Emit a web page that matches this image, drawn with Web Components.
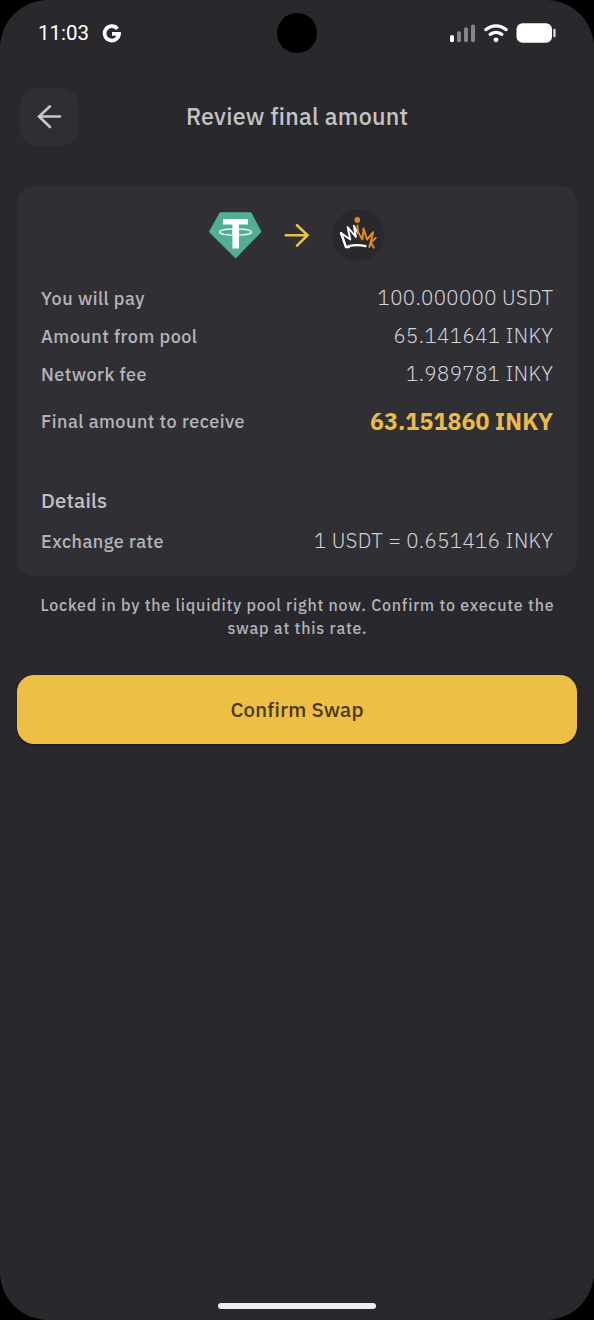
<!DOCTYPE html>
<html lang="en">
<head>
<meta charset="utf-8">
<title>Review final amount</title>
<style>
html,body{margin:0;background:#000}
body{font-family:"IBM Plex Sans","Noto Sans",sans-serif;color:#c6c5cb}
</style>
</head>
<body>
<swap-screen></swap-screen>
<script>
const define = (name, html, setup) => {
  const tpl = document.createElement('template');
  tpl.innerHTML = html;
  customElements.define(name, class extends HTMLElement {
    connectedCallback() {
      if (this.shadowRoot) return;
      this.attachShadow({mode: 'open'}).append(tpl.content.cloneNode(true));
      if (setup) setup(this);
    }
  });
};

/* Text line tracked so that it spans the number of pixels in its "span" attribute. */
define('tracked-text', `<style>:host{display:block;white-space:nowrap}span{display:inline-block}</style><span><slot></slot></span>`, el => {
  const s = el.shadowRoot.querySelector('span');
  const n = el.textContent.length - 1;
  const gap = (Number(el.getAttribute('span')) - s.getBoundingClientRect().width) / n;
  s.style.letterSpacing = gap + 'px';
  s.style.marginRight = -gap + 'px';
});

define('status-bar', `<style>
:host{display:grid;grid-template-columns:1fr 40px 1fr;align-items:center;height:66px;padding:0 38px;box-sizing:border-box;color:#fff}
.l{display:flex;align-items:center;gap:13px;font:400 20.5px/24px Roboto,sans-serif}
.r{display:flex;align-items:center;justify-content:flex-end;gap:8px}
.cam{width:40px;height:40px;border-radius:50%;background:#000}
svg{display:block}
.g{margin-top:2px}
</style>
<div class="l"><tracked-text span="51">11:03</tracked-text>
<svg class="g" width="20" height="20" viewBox="0 0 20 20"><path d="M15.5 4.9A7.2 7.2 0 1 0 17 9.8H10" fill="none" stroke="#fff" stroke-width="3.7"/></svg></div>
<div class="cam"></div>
<div class="r">
<svg width="26" height="19" viewBox="0 0 26 19"><rect x="0" y="11" width="4" height="7.3" rx="1.8" fill="#fff"/><g fill="#858488"><rect x="7" y="7.2" width="4" height="11.1" rx="1.8"/><rect x="14" y="3.3" width="4" height="15" rx="1.8"/><rect x="21" y=".5" width="4" height="17.8" rx="1.8"/></g></svg>
<svg width="24" height="19" viewBox="0 0 24 19"><g fill="none" stroke="#fff" stroke-width="3.2" stroke-linecap="round"><path d="M1.8 5.6Q12-1.8 22.2 5.6M6.2 10.4Q12 6.3 17.8 10.4"/></g><circle cx="12" cy="15.8" r="2.4" fill="#fff"/></svg>
<svg width="40" height="20" viewBox="0 0 40 20"><rect x="0.5" y="0.3" width="35.5" height="19.4" rx="6" fill="#fff"/><rect x="37.3" y="5.7" width="2.3" height="8.6" rx="1.1" fill="#ddd"/></svg>
</div>`);

define('page-header', `<style>
:host{display:grid;grid-template-columns:58px 1fr 58px;align-items:center;height:58px;margin:22px 20px 0}
button{width:58px;height:58px;border:0;border-radius:16px;background:#2f2e33;padding:0;display:grid;place-items:center}
.t{display:flex;justify-content:center;font-size:23.3px;line-height:30px;font-weight:500;color:#c3c2c7;padding-bottom:2px}
</style>
<button aria-label="Back"><svg width="26" height="26" viewBox="0 0 26 26"><path d="M24 12.5H3M14 2.3L3 12.5L14 23" fill="none" stroke="#c8c7cc" stroke-width="2.6" stroke-linecap="round"/></svg></button>
<div class="t"><slot></slot></div>`);

define('token-pair', `<style>
:host{display:flex;justify-content:center;align-items:center;gap:22px;height:54px;padding-right:2px}
svg{display:block}
</style>
<svg width="54" height="48" viewBox="0 0 54 48"><path d="M12 1.8H43L53.1 20.9L27.6 47L1.4 20.9Z" fill="#50af95" stroke="#50af95" stroke-linejoin="round"/><path d="M15 8H40V13.6H31V37.5H24.4V13.6H15Z" fill="#fff"/><ellipse cx="27.5" cy="21" rx="16" ry="3.2" fill="none" stroke="#fff" stroke-width="1.2"/><path d="M24.4 18.4H31v5h-6.6z" fill="#fff"/></svg>
<svg width="26" height="26" viewBox="0 0 26 26"><path d="M1.8 13.3H23.5M13 3.2L23.6 13.3L13 23.6" fill="none" stroke="#eebf46" stroke-width="2.6" stroke-linecap="round"/></svg>
<svg width="52" height="52" viewBox="0 0 52 52"><circle cx="26" cy="26" r="26" fill="#29282c"/><g fill="none" stroke-linecap="round" stroke-linejoin="round"><path d="M14 38.2L9 24L18.3 30.5L15.6 18L23.9 28L21.8 16.6L26 24" stroke="#fff" stroke-width="1.9"/><path d="M17 38.2H14L9 24M16.5 37.2Q25 35 33.5 37.2" stroke="#fff" stroke-width="2.3"/><path d="M25.4 16.5L26 23L30.4 30.5L31.6 19.6L35 30.5L41.2 23.2L37.4 38M43.6 29L38.7 33.5L41.8 38.6" stroke="#df8b23" stroke-width="2"/></g><circle cx="25.3" cy="10.9" r="2.8" fill="#df8b23"/></svg>`);

define('amount-row', `<style>
:host{display:flex;justify-content:space-between;align-items:center;height:38px}
.k{font-size:18px;font-weight:500;line-height:24px;color:#b5b4ba;padding-top:1px}
.v{font-size:20.4px;font-weight:300;line-height:26px;color:#d2d1d6;padding-bottom:1px}
:host(.low) .k{padding-top:2px}
:host(.low) .v{padding-bottom:0}
:host([total]) .v{font-size:23.2px;font-weight:700;line-height:30px;color:#e9bc47;padding:0 0 1px}
</style><div class="k"><slot name="label"></slot></div><div class="v"><slot></slot></div>`);

define('summary-card', `<style>
:host{display:block;height:390px;box-sizing:border-box;margin:40px 17px 0;padding:22px 24px 0;border-radius:17px;background:#302f34}
</style><slot></slot>`);

define('primary-button', `<style>
:host{display:block;margin:35px 17px 0}
button{width:100%;height:69px;border:0;border-radius:17px;background:#edbf45;color:#4a370b;display:grid;place-items:center;font-family:inherit;font-size:20.4px;font-weight:500;line-height:28px;padding:0;box-shadow:0 1px 2px #17171a}
</style><button><slot></slot></button>`);

define('swap-screen', `<style>
:host{display:flex;flex-direction:column;width:594px;height:1320px;box-sizing:border-box;background:#29282c;border-radius:48px;overflow:hidden}
.fee{height:37px}
h2{margin:47px 0 0;font-size:20.4px;line-height:28px;font-weight:500;color:#c1c0c6}
.rate{margin-top:6px}
.note{display:flex;flex-direction:column;align-items:center;margin-top:18px;font-size:16px;line-height:23px;font-weight:500;color:#b3b2b8}
.bar{width:158px;height:6px;border-radius:3px;background:#eeedf1;margin:auto auto 11px}
</style>
<status-bar></status-bar>
<page-header><tracked-text span="222">Review final amount</tracked-text></page-header>
<summary-card>
<token-pair></token-pair>
<amount-row style="margin-top:17px"><tracked-text slot="label" span="103.5">You will pay</tracked-text><tracked-text span="175.5">100.000000 USDT</tracked-text></amount-row>
<amount-row><tracked-text slot="label" span="156">Amount from pool</tracked-text><tracked-text span="159.5">65.141641 INKY</tracked-text></amount-row>
<amount-row class="fee low"><tracked-text slot="label" span="105.5">Network fee</tracked-text><tracked-text span="147">1.989781 INKY</tracked-text></amount-row>
<amount-row total style="margin-top:10px"><tracked-text slot="label" span="203.5">Final amount to receive</tracked-text><tracked-text span="183">63.151860 INKY</tracked-text></amount-row>
<h2><tracked-text span="66">Details</tracked-text></h2>
<amount-row class="rate low" style="height:39px"><tracked-text slot="label" span="122.5">Exchange rate</tracked-text><tracked-text span="239">1 USDT = 0.651416 INKY</tracked-text></amount-row>
</summary-card>
<div class="note"><tracked-text span="513">Locked in by the liquidity pool right now. Confirm to execute the</tracked-text><tracked-text span="139">swap at this rate.</tracked-text></div>
<primary-button><tracked-text span="133">Confirm Swap</tracked-text></primary-button>
<div class="bar"></div>`);
</script>
</body>
</html>
